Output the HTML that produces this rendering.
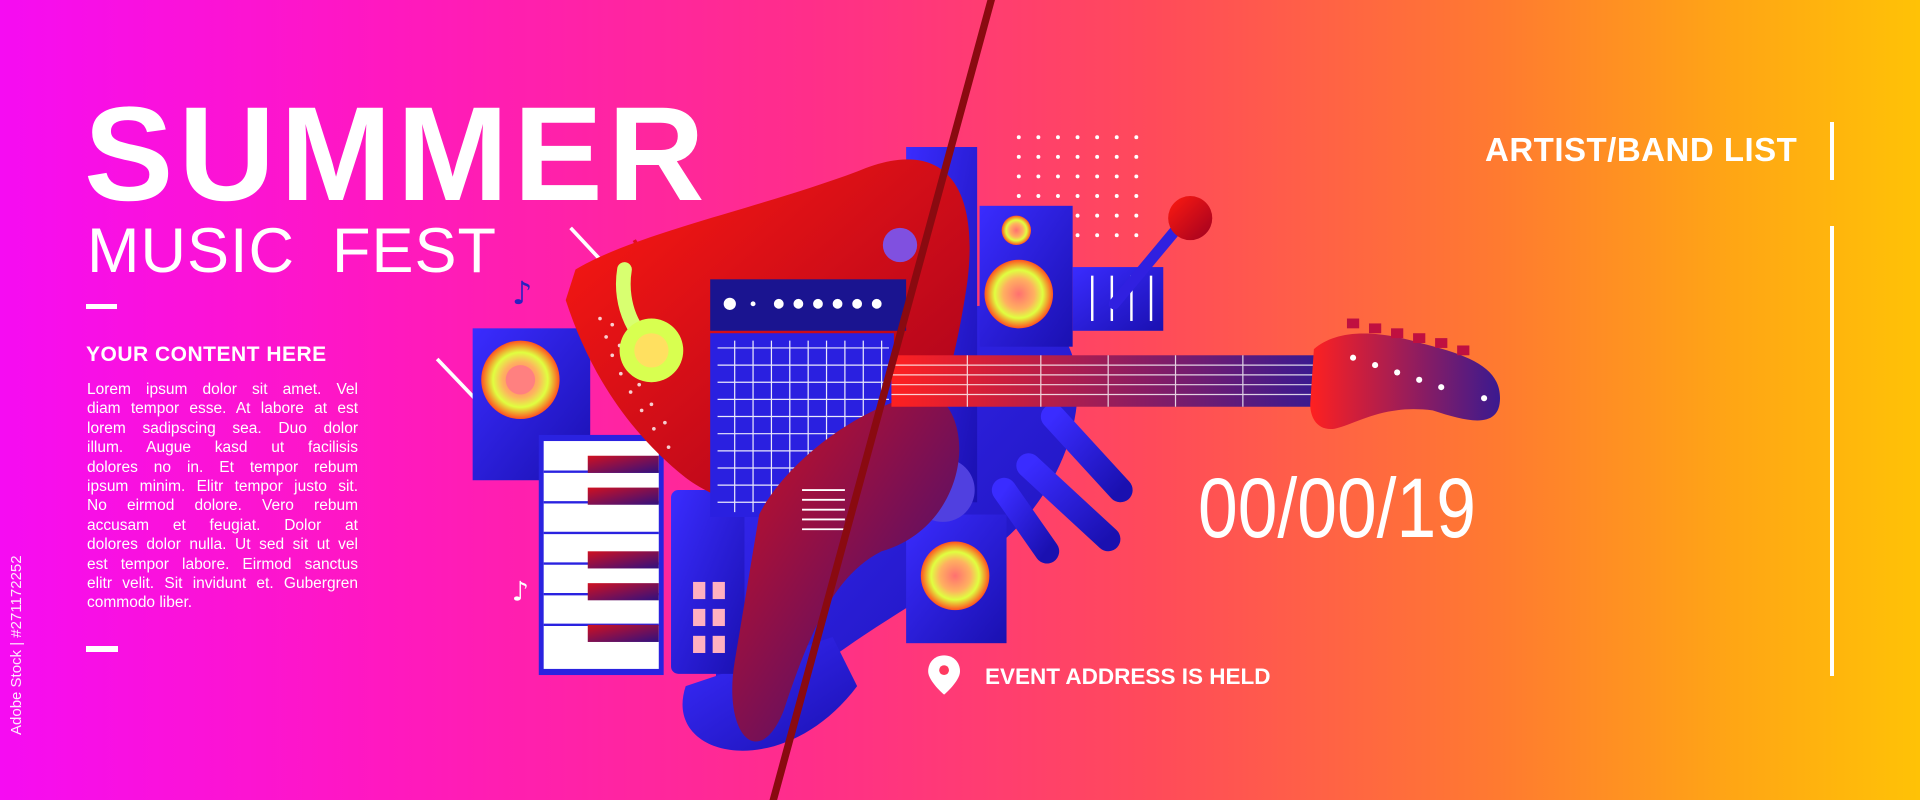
<!DOCTYPE html>
<html><head><meta charset="utf-8"><style>
html,body{margin:0;padding:0}
body{width:1920px;height:800px;overflow:hidden;position:relative;font-family:"Liberation Sans",sans-serif;color:#fff;
background:linear-gradient(90deg,#f60cf2 0%,#ff18c0 20%,#ff2e8a 42%,#ff4a5a 60%,#ff7a30 78%,#ffa515 90%,#ffc206 100%);}
.a{position:absolute;white-space:nowrap}
svg{position:absolute;left:0;top:0}
.body div{text-align:justify;text-align-last:justify;height:19.4px}
</style></head><body>
<svg width="1920" height="800" viewBox="0 0 1568 653" preserveAspectRatio="none">
<defs>
<linearGradient id="red" x1="0" y1="0" x2="1" y2="1"><stop offset="0" stop-color="#ff1a10"/><stop offset="1" stop-color="#a00020"/></linearGradient>
<linearGradient id="blu" x1="0" y1="0" x2="1" y2="1"><stop offset="0" stop-color="#3a2cff"/><stop offset="1" stop-color="#1a10b0"/></linearGradient>
<linearGradient id="neck" x1="0" y1="0" x2="1" y2="0"><stop offset="0" stop-color="#ff2020"/><stop offset="1" stop-color="#3a1a90"/></linearGradient>
<radialGradient id="spk"><stop offset="0" stop-color="#ff7070"/><stop offset=".45" stop-color="#ffb060"/><stop offset=".7" stop-color="#e0ff40"/><stop offset="1" stop-color="#ff5020"/></radialGradient>
<linearGradient id="dk" x1="0" y1="0" x2="1" y2="1"><stop offset="0" stop-color="#d01020"/><stop offset="1" stop-color="#301080"/></linearGradient>
</defs>
<g fill="#fff">
<g id="dr"><circle cx="832" cy="112" r="1.6"/><circle cx="848" cy="112" r="1.6"/><circle cx="864" cy="112" r="1.6"/><circle cx="880" cy="112" r="1.6"/><circle cx="896" cy="112" r="1.6"/><circle cx="912" cy="112" r="1.6"/><circle cx="928" cy="112" r="1.6"/></g>
<use href="#dr" y="16"/><use href="#dr" y="32"/><use href="#dr" y="48"/><use href="#dr" y="64"/><use href="#dr" y="80"/>
</g>
<g stroke="#fff" stroke-width="3">
<line x1="357" y1="293" x2="442" y2="382"/><line x1="466" y1="186" x2="494" y2="216"/>
<line x1="700" y1="432" x2="760" y2="502"/><line x1="605" y1="466" x2="657" y2="535"/>
</g>
<line x1="518" y1="196" x2="535" y2="225" stroke="#e01020" stroke-width="3"/>
<path d="M600 380 C640 300 760 240 830 250 C900 265 890 360 840 420 C800 470 720 500 650 560 C610 600 570 590 590 520 Z" fill="url(#blu)"/>
<path d="M560 560 C540 620 640 640 700 560 L680 520 Z" fill="url(#blu)"/>
<g stroke="url(#blu)" stroke-width="20" stroke-linecap="round" fill="none">
<line x1="860" y1="340" x2="915" y2="400"/><line x1="840" y1="380" x2="905" y2="440"/><line x1="820" y1="400" x2="855" y2="450"/>
</g>
<rect x="386" y="268" width="96" height="124" fill="url(#blu)"/>
<circle cx="425" cy="310" r="32" fill="url(#spk)"/><circle cx="425" cy="310" r="12" fill="#ff8080"/>
<rect x="440" y="355" width="102" height="196" fill="#2a22e0"/>
<rect x="444" y="360" width="94" height="186" fill="#fff"/>
<g stroke="#2a22e0" stroke-width="2"><line x1="444" y1="385" x2="538" y2="385"/><line x1="444" y1="410" x2="538" y2="410"/><line x1="444" y1="435" x2="538" y2="435"/><line x1="444" y1="460" x2="538" y2="460"/><line x1="444" y1="485" x2="538" y2="485"/><line x1="444" y1="510" x2="538" y2="510"/></g>
<g fill="url(#dk)"><rect x="480" y="372" width="58" height="14"/><rect x="480" y="398" width="58" height="14"/><rect x="480" y="450" width="58" height="14"/><rect x="480" y="476" width="58" height="14"/><rect x="480" y="510" width="58" height="14"/></g>
<rect x="548" y="400" width="60" height="150" rx="6" fill="url(#blu)"/>
<g fill="#ffb0c0"><rect x="566" y="475" width="10" height="14"/><rect x="582" y="475" width="10" height="14"/><rect x="566" y="497" width="10" height="14"/><rect x="582" y="497" width="10" height="14"/><rect x="566" y="519" width="10" height="14"/><rect x="582" y="519" width="10" height="14"/></g>
<rect x="740" y="120" width="58" height="290" fill="url(#blu)"/>
<rect x="800" y="168" width="76" height="115" fill="url(#blu)"/>
<circle cx="830" cy="188" r="12" fill="url(#spk)"/><circle cx="832" cy="240" r="28" fill="url(#spk)"/>
<rect x="876" y="218" width="74" height="52" fill="url(#blu)"/>
<g stroke="#fff" stroke-width="2"><line x1="892" y1="225" x2="892" y2="262"/><line x1="908" y1="225" x2="908" y2="262"/><line x1="924" y1="225" x2="924" y2="262"/><line x1="940" y1="225" x2="940" y2="262"/></g>
<line x1="960" y1="188" x2="910" y2="248" stroke="#3020e0" stroke-width="9" stroke-linecap="round"/>
<circle cx="972" cy="178" r="18" fill="url(#red)"/>
<rect x="740" y="420" width="82" height="105" fill="url(#blu)"/>
<circle cx="780" cy="470" r="28" fill="url(#spk)"/>
<circle cx="770" cy="400" r="26" fill="#5040e0"/>
<path d="M470 220 C520 190 620 170 700 140 C770 110 800 150 790 230 C780 300 760 370 730 400 C690 440 600 420 560 390 C510 350 480 300 462 245 Z" fill="url(#red)"/>
<g fill="#fff" opacity=".8"><circle cx="490" cy="260" r="1.5"/><circle cx="495" cy="275" r="1.5"/><circle cx="500" cy="290" r="1.5"/><circle cx="507" cy="305" r="1.5"/><circle cx="515" cy="320" r="1.5"/><circle cx="524" cy="335" r="1.5"/><circle cx="534" cy="350" r="1.5"/><circle cx="546" cy="365" r="1.5"/><circle cx="500" cy="265" r="1.5"/><circle cx="506" cy="282" r="1.5"/><circle cx="513" cy="298" r="1.5"/><circle cx="522" cy="314" r="1.5"/><circle cx="532" cy="330" r="1.5"/><circle cx="543" cy="345" r="1.5"/></g>
<path d="M510 220 C505 250 520 280 540 285" stroke="#d8ff70" stroke-width="12" fill="none" stroke-linecap="round"/>
<circle cx="532" cy="286" r="26" fill="#d8ff50"/><circle cx="532" cy="286" r="14" fill="#ffe060"/>
<circle cx="735" cy="200" r="14" fill="#8050e0"/>
<rect x="580" y="228" width="160" height="42" fill="#1a1490"/>
<g fill="#fff"><circle cx="596" cy="248" r="5"/><circle cx="615" cy="248" r="2"/><circle cx="636" cy="248" r="4"/><circle cx="652" cy="248" r="4"/><circle cx="668" cy="248" r="4"/><circle cx="684" cy="248" r="4"/><circle cx="700" cy="248" r="4"/><circle cx="716" cy="248" r="4"/></g>
<rect x="580" y="272" width="150" height="150" fill="#2a20e0"/>
<g stroke="#fff" stroke-width="1" opacity=".9">
<line x1="586" y1="284" x2="726" y2="284"/><line x1="586" y1="298" x2="726" y2="298"/><line x1="586" y1="312" x2="726" y2="312"/><line x1="586" y1="326" x2="726" y2="326"/><line x1="586" y1="340" x2="726" y2="340"/><line x1="586" y1="354" x2="726" y2="354"/><line x1="586" y1="368" x2="726" y2="368"/><line x1="586" y1="382" x2="726" y2="382"/><line x1="586" y1="396" x2="726" y2="396"/><line x1="586" y1="410" x2="726" y2="410"/>
<line x1="600" y1="278" x2="600" y2="418"/><line x1="615" y1="278" x2="615" y2="418"/><line x1="630" y1="278" x2="630" y2="418"/><line x1="645" y1="278" x2="645" y2="418"/><line x1="660" y1="278" x2="660" y2="418"/><line x1="675" y1="278" x2="675" y2="418"/><line x1="690" y1="278" x2="690" y2="418"/><line x1="705" y1="278" x2="705" y2="418"/><line x1="720" y1="278" x2="720" y2="418"/>
</g>
<path d="M620 420 C640 380 700 330 760 320 C800 340 790 430 720 450 C680 470 660 520 640 580 C620 630 590 600 600 540 Z" fill="url(#dk)"/>
<g stroke="#fff" stroke-width="1.5"><line x1="655" y1="400" x2="690" y2="400"/><line x1="655" y1="408" x2="690" y2="408"/><line x1="655" y1="416" x2="690" y2="416"/><line x1="655" y1="424" x2="690" y2="424"/><line x1="655" y1="432" x2="690" y2="432"/></g>
<rect x="728" y="290" width="345" height="42" fill="url(#neck)"/>
<g stroke="#fff" stroke-width="1" opacity=".8"><line x1="728" y1="298" x2="1073" y2="298"/><line x1="728" y1="306" x2="1073" y2="306"/><line x1="728" y1="314" x2="1073" y2="314"/><line x1="728" y1="322" x2="1073" y2="322"/>
<line x1="790" y1="290" x2="790" y2="332"/><line x1="850" y1="290" x2="850" y2="332"/><line x1="905" y1="290" x2="905" y2="332"/><line x1="960" y1="290" x2="960" y2="332"/><line x1="1015" y1="290" x2="1015" y2="332"/></g>
<path d="M1073 285 C1090 270 1120 268 1160 280 C1200 290 1225 300 1225 325 C1225 350 1200 345 1170 335 C1130 330 1110 345 1090 350 C1075 352 1070 340 1070 330 Z" fill="url(#neck)"/>
<g fill="#c01040"><rect x="1100" y="260" width="10" height="8"/><rect x="1118" y="264" width="10" height="8"/><rect x="1136" y="268" width="10" height="8"/><rect x="1154" y="272" width="10" height="8"/><rect x="1172" y="276" width="10" height="8"/><rect x="1190" y="282" width="10" height="8"/></g>
<g fill="#fff"><circle cx="1105" cy="292" r="2.5"/><circle cx="1123" cy="298" r="2.5"/><circle cx="1141" cy="304" r="2.5"/><circle cx="1159" cy="310" r="2.5"/><circle cx="1177" cy="316" r="2.5"/><circle cx="1212" cy="325" r="2.5"/></g>
<text x="418" y="248" font-size="26" fill="#2a20c0" font-family="DejaVu Sans">♪</text>
<text x="418" y="490" font-size="22" fill="#fff" font-family="DejaVu Sans">♪</text>
<line x1="810" y1="-2" x2="631" y2="655" stroke="#8a0a10" stroke-width="6"/>
<path d="M771 535 C763 535 758 541 758 548 C758 556 771 567 771 567 C771 567 784 556 784 548 C784 541 779 535 771 535 Z" fill="#fff"/>
<circle cx="771" cy="547" r="4" fill="#ff3a60"/>
</svg>
<div class="a" style="left:84px;top:88px;font-size:134px;font-weight:bold;line-height:1;letter-spacing:5px">SUMMER</div>
<div class="a" style="left:87px;top:220px;font-size:63px;line-height:1;letter-spacing:1px">MUSIC&nbsp; FEST</div>
<div class="a" style="left:86px;top:304px;width:31px;height:5px;background:#fff"></div>
<div class="a" style="left:86px;top:343px;font-size:21px;font-weight:bold;letter-spacing:0.5px">YOUR CONTENT HERE</div>
<div class="a body" style="left:87px;top:380px;width:271px;font-size:15.5px;line-height:19.4px;white-space:normal">
<div>Lorem ipsum dolor sit amet. Vel</div>
<div>diam tempor esse. At labore at est</div>
<div>lorem sadipscing sea. Duo dolor</div>
<div>illum. Augue kasd ut facilisis</div>
<div>dolores no in. Et tempor rebum</div>
<div>ipsum minim. Elitr tempor justo sit.</div>
<div>No eirmod dolore. Vero rebum</div>
<div>accusam et feugiat. Dolor at</div>
<div>dolores dolor nulla. Ut sed sit ut vel</div>
<div>est tempor labore. Eirmod sanctus</div>
<div>elitr velit. Sit invidunt et. Gubergren</div>
<div style="text-align-last:left">commodo liber.</div>
</div>
<div class="a" style="left:86px;top:646px;width:32px;height:6px;background:#fff"></div>
<div class="a" style="left:8px;top:735px;font-size:15px;transform:rotate(-90deg);transform-origin:0 0;opacity:.9">Adobe Stock | #271172252</div>
<div class="a" style="left:1485px;top:131px;font-size:33px;font-weight:bold;letter-spacing:0.5px">ARTIST/BAND LIST</div>
<div class="a" style="left:1830px;top:122px;width:4px;height:58px;background:#fff"></div>
<div class="a" style="left:1830px;top:226px;width:4px;height:450px;background:#fff"></div>
<div class="a" style="left:1198px;top:466px;font-size:84px;line-height:1;transform:scaleX(0.85);transform-origin:0 0">00/00/19</div>
<div class="a" style="left:985px;top:664px;font-size:22.5px;font-weight:bold">EVENT ADDRESS IS HELD</div>
</body></html>
